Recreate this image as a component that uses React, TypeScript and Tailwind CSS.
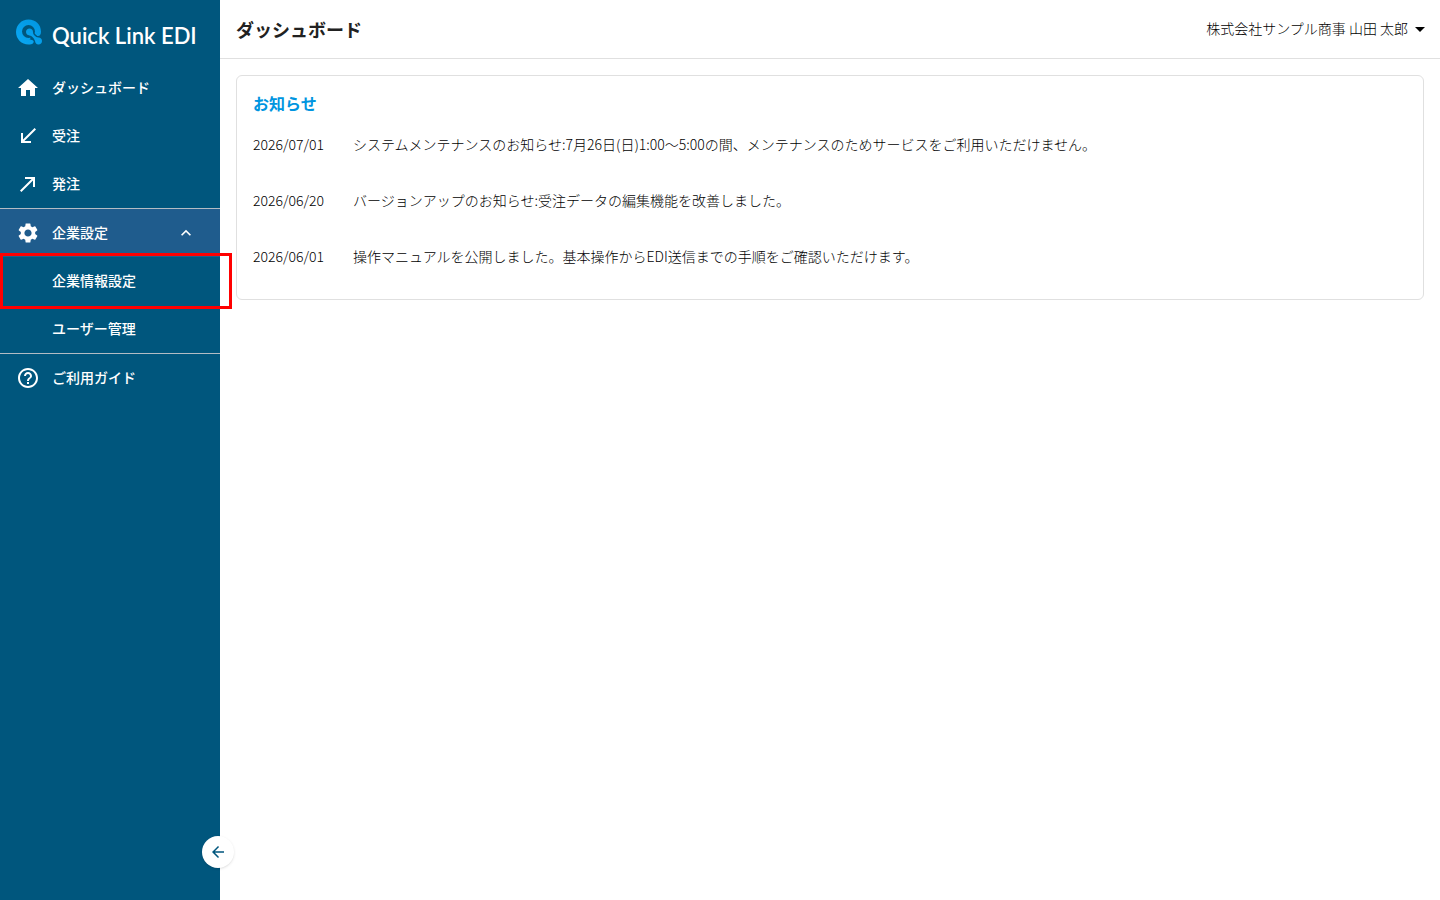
import type { IconType } from "react-icons";
import {
  MdArrowBack,
  MdArrowDropDown,
  MdHelpOutline,
  MdHome,
  MdKeyboardArrowUp,
  MdNorthEast,
  MdSettings,
  MdSouthWest,
} from "react-icons/md";

const news = [
  {
    date: "2026/07/01",
    text: "システムメンテナンスのお知らせ:7月26日(日)1:00〜5:00の間、メンテナンスのためサービスをご利用いただけません。",
  },
  {
    date: "2026/06/20",
    text: "バージョンアップのお知らせ:受注データの編集機能を改善しました。",
  },
  {
    date: "2026/06/01",
    text: "操作マニュアルを公開しました。基本操作からEDI送信までの手順をご確認いただけます。",
  },
];

function NavItem({ icon: Icon, label }: { icon: IconType; label: string }) {
  return (
    <a href="#" className="flex h-12 items-center gap-3 px-4 hover:bg-white/10">
      <Icon size={24} />
      <span className="pb-0.5">{label}</span>
    </a>
  );
}

function LogoMark() {
  return (
    <svg width="26" height="26" viewBox="0 0 26 26" aria-hidden="true">
      <defs>
        <linearGradient id="mark" x1="0" y1="1" x2="1" y2="0">
          <stop offset="0" stopColor="#0aa8f4" />
          <stop offset="1" stopColor="#0095e0" />
        </linearGradient>
      </defs>
      <path
        fill="url(#mark)"
        d="M12.500 0.500C19.800 0.500 25 5.500 25 12.800C25 15.500 24 17 22 17C20.500 17 19.500 16.200 18.500 15.200L13.500 20.200L17.500 21.500C18.300 24 16.500 25.500 12.500 25.500C5.500 25.500 0 20 0 13C0 6 5.500 0.500 12.500 0.500Z"
      />
      <circle cx="12.500" cy="12.500" r="6.500" fill="#00567d" />
      <path stroke="#00567d" strokeWidth="6" d="M13 13L21 21" />
      <path
        fill="url(#mark)"
        d="M13.500 9.500C15.500 9.500 17 11 17 13C17 14.500 17.500 15.500 18.500 16.500C19.800 17.800 20.500 18.500 22.500 18.500C24.500 18.500 26 20 26 22C26 24.200 24.500 25.500 22.500 25.500C20.200 25.500 19.500 24 19 22C18.500 20.200 16.500 17 13.500 16.500C11.500 16.200 10 15 10 13C10 11 11.500 9.500 13.500 9.500Z"
      />
    </svg>
  );
}

function Sidebar() {
  return (
    <aside className="relative w-[220px] shrink-0 bg-[#00567d] text-sm font-medium text-white">
      <a href="#" className="flex h-16 items-center gap-2.5 px-4">
        <LogoMark />
        <span className="pt-2 font-['Lato',sans-serif] text-[22px] leading-8 font-semibold whitespace-nowrap">
          Quick Link EDI
        </span>
      </a>

      <nav>
        <NavItem icon={MdHome} label="ダッシュボード" />
        <NavItem icon={MdSouthWest} label="受注" />
        <NavItem icon={MdNorthEast} label="発注" />

        <div className="border-y border-[#b3bcc4]">
          <button
            type="button"
            aria-expanded="true"
            className="flex h-12 w-full items-center gap-3 bg-[#1f5c8d] pr-6 pl-4"
          >
            <MdSettings size={24} />
            <span className="pb-0.5">企業設定</span>
            <MdKeyboardArrowUp size={20} className="ml-auto" />
          </button>
          <div className="relative">
            <a href="#" className="flex h-12 items-center pb-0.5 pl-13">
              企業情報設定
            </a>
            <div className="pointer-events-none absolute -inset-y-1 -right-3 left-0 z-10 border-3 border-[#ff0000]" />
          </div>
          <a href="#" className="flex h-12 items-center pb-0.5 pl-13">
            ユーザー管理
          </a>
        </div>

        <NavItem icon={MdHelpOutline} label="ご利用ガイド" />
      </nav>

      <button
        type="button"
        aria-label="メニューを閉じる"
        className="absolute -right-3.5 bottom-8 flex size-8 items-center justify-center rounded-full bg-white text-[#00567d] shadow-sm"
      >
        <MdArrowBack size={18} />
      </button>
    </aside>
  );
}

export default function App() {
  return (
    <div className="flex min-h-screen bg-white font-['Noto_Sans_CJK_JP',sans-serif] text-[#212121]">
      <Sidebar />

      <div className="min-w-0 flex-1">
        <header className="flex h-[59px] items-center justify-between border-b border-[#e0e0e0] pl-4">
          <h1 className="text-lg font-bold">ダッシュボード</h1>
          <button type="button" className="flex items-center pr-2 text-sm font-light text-black">
            <span className="pb-0.5">株式会社サンプル商事 山田 太郎</span>
            <MdArrowDropDown size={24} />
          </button>
        </header>

        <main className="p-4">
          <section className="rounded-md border border-[#e0e0e0] px-4 py-[15px]">
            <h2 className="mb-px leading-6 font-bold text-[#0095e0]">お知らせ</h2>
            <ul className="text-sm font-light text-black">
              {news.map((item) => (
                <li key={item.date} className="flex h-14 gap-5 pt-4 leading-6">
                  <time className="w-20 shrink-0">{item.date}</time>
                  <p>{item.text}</p>
                </li>
              ))}
            </ul>
          </section>
        </main>
      </div>
    </div>
  );
}
